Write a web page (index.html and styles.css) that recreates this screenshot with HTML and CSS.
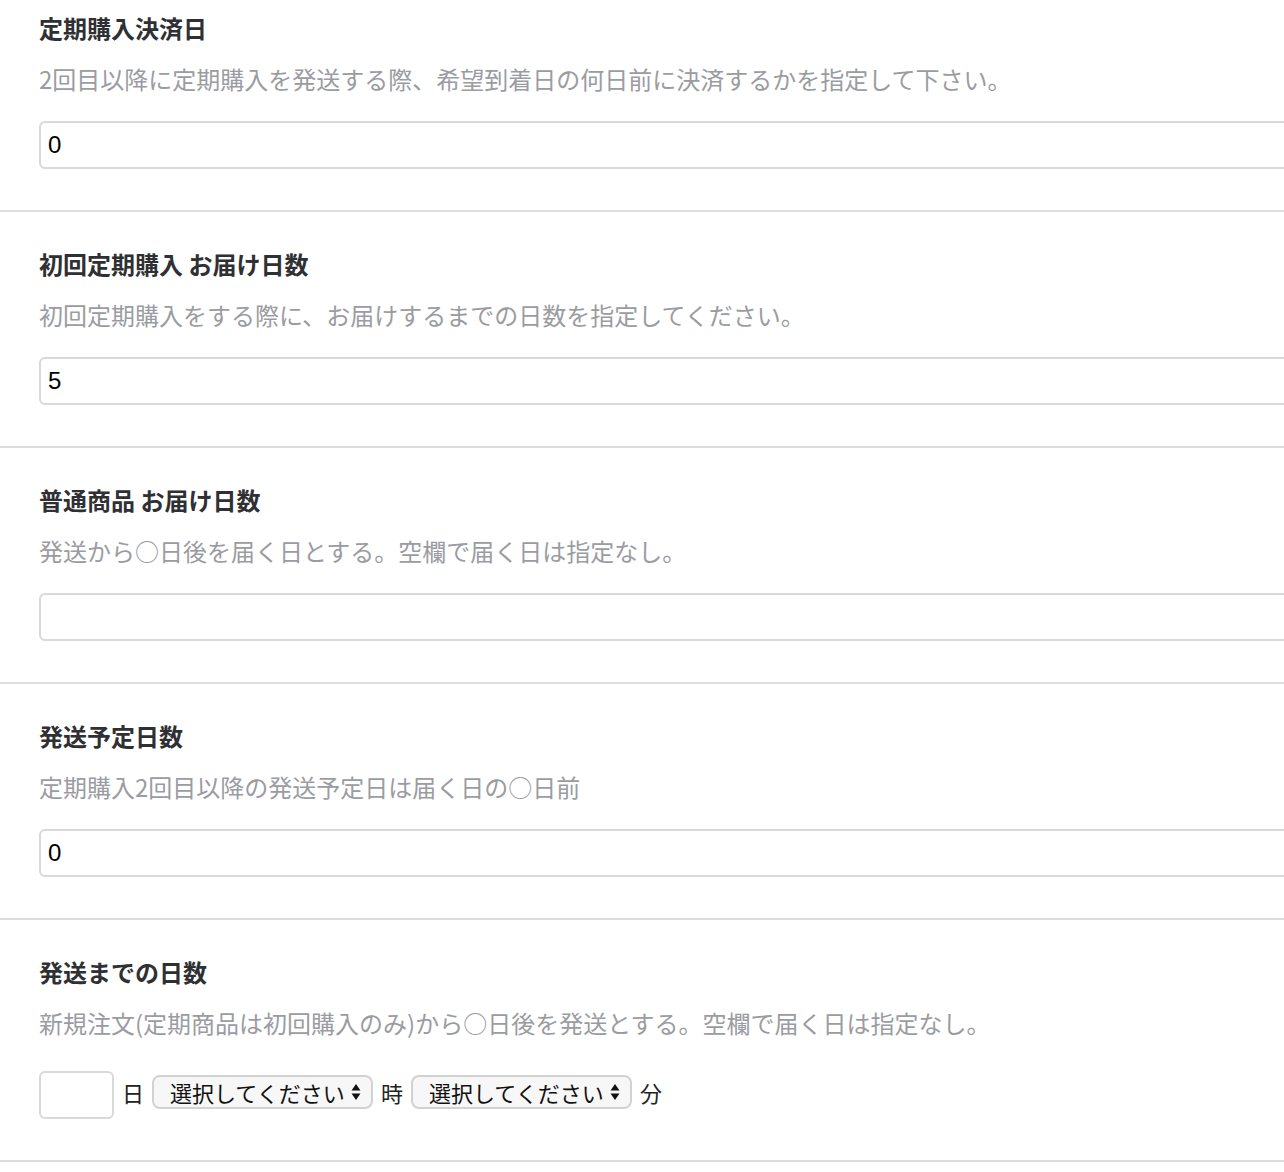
FILE: index.html
```html
<!DOCTYPE html>
<html lang="ja">
<head>
<meta charset="utf-8">
<title>設定</title>
<link rel="stylesheet" href="styles.css">
</head>
<body>
<div class="page">
  <section class="field field-first">
    <h2 class="field-title">定期購入決済日</h2>
    <p class="field-help">2回目以降に定期購入を発送する際、希望到着日の何日前に決済するかを指定して下さい。</p>
    <input class="text-input" type="text" value="0">
  </section>
  <section class="field">
    <h2 class="field-title">初回定期購入 お届け日数</h2>
    <p class="field-help">初回定期購入をする際に、お届けするまでの日数を指定してください。</p>
    <input class="text-input" type="text" value="5">
  </section>
  <section class="field">
    <h2 class="field-title">普通商品 お届け日数</h2>
    <p class="field-help">発送から○日後を届く日とする。空欄で届く日は指定なし。</p>
    <input class="text-input" type="text" value="">
  </section>
  <section class="field">
    <h2 class="field-title">発送予定日数</h2>
    <p class="field-help">定期購入2回目以降の発送予定日は届く日の○日前</p>
    <input class="text-input" type="text" value="0">
  </section>
  <section class="field">
    <h2 class="field-title">発送までの日数</h2>
    <p class="field-help">新規注文(定期商品は初回購入のみ)から○日後を発送とする。空欄で届く日は指定なし。</p>
    <div class="inline-row">
      <input class="small-input" type="text" value="">
      <span class="unit">日</span>
      <span class="select-wrap">
        <select class="select"><option>選択してください</option></select>
        <svg class="select-arrow" width="10" height="18" viewBox="0 0 10 18"><path d="M5 1 L9.5 7.5 H0.5 Z" fill="#111"/><path d="M5 17 L9.5 10.5 H0.5 Z" fill="#111"/></svg>
      </span>
      <span class="unit">時</span>
      <span class="select-wrap">
        <select class="select"><option>選択してください</option></select>
        <svg class="select-arrow" width="10" height="18" viewBox="0 0 10 18"><path d="M5 1 L9.5 7.5 H0.5 Z" fill="#111"/><path d="M5 17 L9.5 10.5 H0.5 Z" fill="#111"/></svg>
      </span>
      <span class="unit">分</span>
    </div>
  </section>
</div>
</body>
</html>
```

FILE: styles.css
```css
html, body {
  margin: 0;
  padding: 0;
  background: #ffffff;
  overflow: hidden;
}

body {
  font-family: "Noto Sans CJK JP", "Noto Sans", sans-serif;
  color: #333333;
}

.page {
  display: flex;
  flex-direction: column;
}

.field {
  display: flex;
  flex-direction: column;
  align-items: flex-start;
  padding: 34px 0 41px 39px;
  border-bottom: 2px solid #dddddd;
}

.field-first {
  padding-top: 10px;
}

.field-title {
  margin: 0;
  font-size: 24px;
  line-height: 36px;
  font-weight: 700;
  color: #2f3033;
}

.field-help {
  margin: 15px 0 24px 0;
  font-size: 24px;
  line-height: 36px;
  font-weight: 400;
  color: #9a9ca2;
  white-space: nowrap;
}

.text-input {
  box-sizing: border-box;
  width: 1300px;
  height: 48px;
  margin: 0;
  padding: 0 7px;
  border: 2px solid #d9d9d9;
  border-radius: 6px;
  background: #ffffff;
  font-family: "Liberation Sans", Arial, sans-serif;
  font-size: 24px;
  color: #000000;
  outline: none;
}

.inline-row {
  display: flex;
  align-items: center;
  margin-top: 6px;
  height: 48px;
}

.small-input {
  box-sizing: border-box;
  width: 75px;
  height: 48px;
  margin: 0 8px 0 0;
  border: 2px solid #d9d9d9;
  border-radius: 6px;
  background: #ffffff;
  outline: none;
}

.unit {
  font-size: 22px;
  line-height: 34px;
  color: #222222;
  margin-top: -6px;
}

.select-wrap {
  position: relative;
  display: inline-flex;
  margin: -6px 8px 0 8px;
}

.select {
  -webkit-appearance: none;
  appearance: none;
  box-sizing: border-box;
  width: 221px;
  height: 34px;
  margin: 0;
  padding: 0 0 0 16px;
  border: 2px solid #d2d2d2;
  border-radius: 8px;
  background: #f7f7f7;
  font-family: "Noto Sans CJK JP", sans-serif;
  font-size: 22px;
  line-height: 30px;
  color: #111111;
  outline: none;
}

.select-arrow {
  position: absolute;
  right: 12px;
  top: 8px;
  pointer-events: none;
}
```
